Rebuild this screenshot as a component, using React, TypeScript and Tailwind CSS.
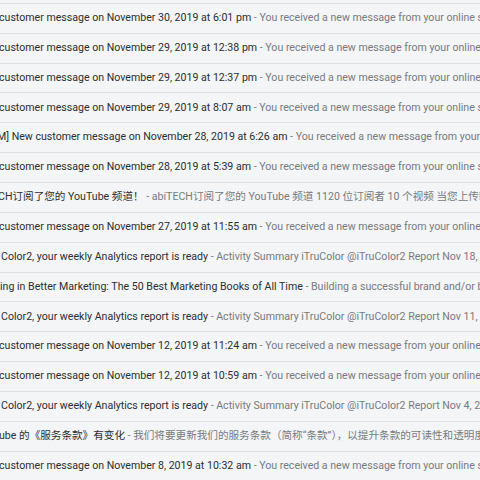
type Mail = {
  subject: string;
  snippet: string;
  shift: string;
};

const STORE = 'You received a new message from your online store\u2019s contact form.';

const mails: Mail[] = [
  { subject: 'customer message on November 30, 2019 at 9:14 pm', snippet: STORE, shift: '-ml-[1px]' },
  { subject: 'customer message on November 30, 2019 at 6:01 pm', snippet: STORE, shift: '-ml-[1px]' },
  { subject: 'customer message on November 29, 2019 at 12:38 pm', snippet: STORE, shift: '-ml-[1px]' },
  { subject: 'customer message on November 29, 2019 at 12:37 pm', snippet: STORE, shift: '-ml-[1px]' },
  { subject: 'customer message on November 29, 2019 at 8:07 am', snippet: STORE, shift: '-ml-[1px]' },
  { subject: 'M] New customer message on November 28, 2019 at 6:26 am', snippet: STORE, shift: '-ml-[3px]' },
  { subject: 'customer message on November 28, 2019 at 5:39 am', snippet: STORE, shift: '-ml-[1px]' },
  {
    subject: 'CH订阅了您的 YouTube 频道！',
    snippet: 'abiTECH订阅了您的 YouTube 频道 1120 位订阅者 10 个视频 当您上传新视频时',
    shift: '-ml-[2px]',
  },
  { subject: 'customer message on November 27, 2019 at 11:55 am', snippet: STORE, shift: '-ml-[1px]' },
  {
    subject: 'Color2, your weekly Analytics report is ready',
    snippet: 'Activity Summary iTruColor @iTruColor2 Report Nov 18, 2019',
    shift: 'ml-[1px]',
  },
  {
    subject: 'ing in Better Marketing: The 50 Best Marketing Books of All Time',
    snippet: 'Building a successful brand and/or business takes time',
    shift: 'ml-0',
  },
  {
    subject: 'Color2, your weekly Analytics report is ready',
    snippet: 'Activity Summary iTruColor @iTruColor2 Report Nov 11, 2019',
    shift: 'ml-[1px]',
  },
  { subject: 'customer message on November 12, 2019 at 11:24 am', snippet: STORE, shift: '-ml-[1px]' },
  { subject: 'customer message on November 12, 2019 at 10:59 am', snippet: STORE, shift: '-ml-[1px]' },
  {
    subject: 'Color2, your weekly Analytics report is ready',
    snippet: 'Activity Summary iTruColor @iTruColor2 Report Nov 4, 2019',
    shift: 'ml-[1px]',
  },
  {
    subject: 'ube 的《服务条款》有变化',
    snippet: '我们将要更新我们的服务条款（简称“条款”），以提升条款的可读性和透明度',
    shift: '-ml-[1px]',
  },
  { subject: 'customer message on November 8, 2019 at 10:32 am', snippet: STORE, shift: '-ml-[1px]' },
];

function MailRow({ mail }: { mail: Mail }) {
  return (
    <div className="flex h-[29.87px] shrink-0 items-center overflow-hidden border-b border-[#dfe2e4] bg-[#f3f5f6]">
      <div className={`whitespace-nowrap text-[10.6px] leading-none ${mail.shift}`}>
        <span className="text-[#2c2e31]">{mail.subject}</span>
        <span className="text-[#777b80]"> - {mail.snippet}</span>
      </div>
    </div>
  );
}

export default function App() {
  return (
    <div
      className="h-[480px] w-[480px] overflow-hidden bg-[#f3f5f6]"
      style={{ fontFamily: 'Roboto, "Noto Sans CJK SC", sans-serif' }}
    >
      <div className="-mt-[26px] flex flex-col">
        {mails.map((m, i) => (
          <MailRow key={i} mail={m} />
        ))}
      </div>
    </div>
  );
}
